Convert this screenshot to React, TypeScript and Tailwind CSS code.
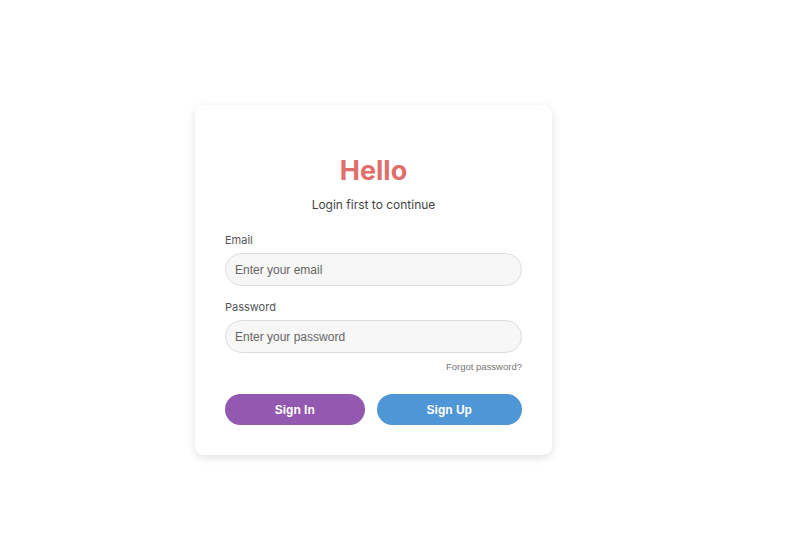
import React, { useState } from 'react'

const inter = { fontFamily: 'Inter, "Noto Sans", sans-serif' }

function Field({
  label,
  type,
  placeholder,
  value,
  onChange,
}: {
  label: string
  type: string
  placeholder: string
  value: string
  onChange: (v: string) => void
}) {
  return (
    <div className="flex flex-col">
      <label style={inter} className="text-[11px] leading-[14px] text-[#555]">{label}</label>
      <input
        type={type}
        value={value}
        placeholder={placeholder}
        onChange={(e) => onChange(e.target.value)}
        className="mt-[6px] h-[33px] w-full rounded-full border border-[#dcdcdc] bg-[#f7f7f7] px-[9px] text-[12px] text-[#333] placeholder:text-[#666] outline-none font-['Liberation_Sans',Arial,sans-serif]"
      />
    </div>
  )
}

export default function App() {
  const [email, setEmail] = useState('')
  const [password, setPassword] = useState('')

  return (
    <div className="min-h-[556px] w-full bg-white pt-[105px] pl-[195px]">
      <div className="w-[357px] rounded-[9px] bg-white px-[30px] pt-[49px] pb-[30px] shadow-[0_3px_10px_rgba(0,0,0,0.12)]">
        <h1 style={inter} className="text-center text-[27px] leading-[34px] font-bold text-[#e06f6b]">
          Hello
        </h1>
        <p style={inter} className="mt-[9px] text-center text-[12px] leading-[16px] text-[#444]">
          Login first to continue
        </p>

        <div className="mt-[20px] flex flex-col gap-[14px]">
          <Field label="Email" type="email" placeholder="Enter your email" value={email} onChange={setEmail} />
          <Field label="Password" type="password" placeholder="Enter your password" value={password} onChange={setPassword} />
        </div>

        <div className="mt-[5px] text-right leading-[12px]">
          <a href="#" className="text-[9.5px] leading-[12px] text-[#777] font-['Liberation_Sans',Arial,sans-serif]">
            Forgot password?
          </a>
        </div>

        <div className="mt-[21px] flex gap-[12px] font-['Liberation_Sans',Arial,sans-serif]">
          <button className="h-[31px] w-[140px] rounded-full bg-[#9359b1] text-[12px] font-bold text-white">
            Sign In
          </button>
          <button className="h-[31px] w-[146px] rounded-full bg-[#4f96d6] text-[12px] font-bold text-white">
            Sign Up
          </button>
        </div>
      </div>
    </div>
  )
}
